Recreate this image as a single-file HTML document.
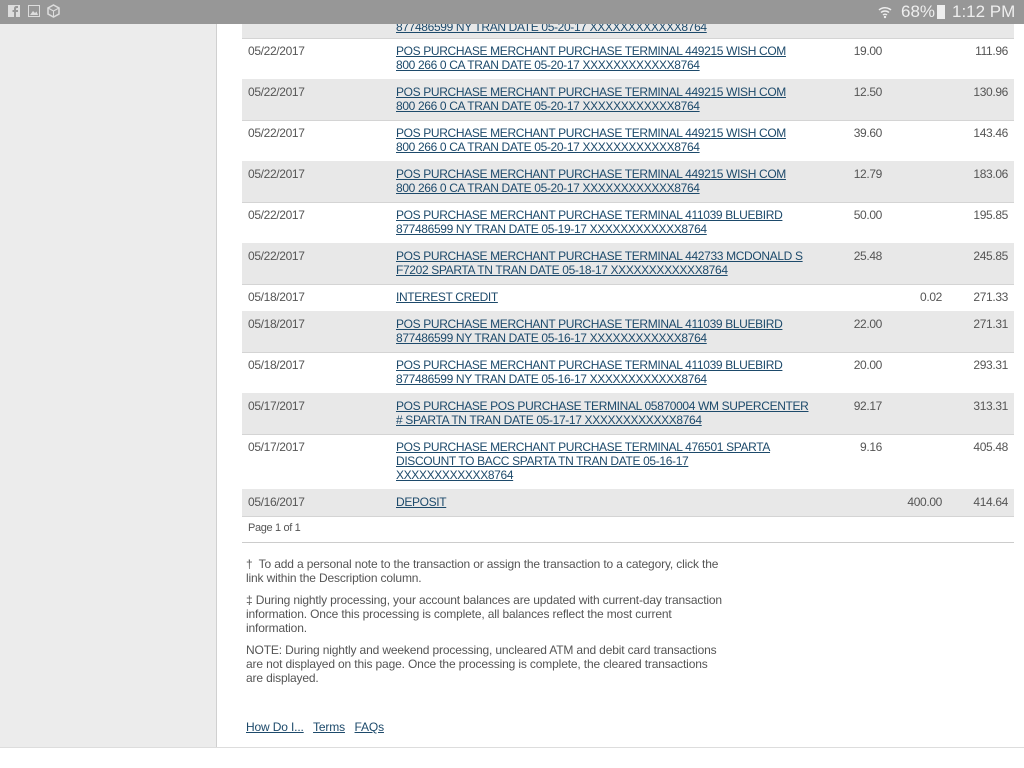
<!DOCTYPE html>
<html><head><meta charset="utf-8"><style>
*{margin:0;padding:0;box-sizing:border-box}
body{width:1024px;height:768px;overflow:hidden;background:#fff;font-family:"Liberation Sans",sans-serif;font-size:12px;color:#555;position:relative;letter-spacing:-0.35px}
#sb{position:absolute;left:0;top:0;width:1024px;height:24px;background:#979797;color:#eee;font-size:17px;letter-spacing:0;z-index:5}
#side{position:absolute;left:0;top:24px;width:217px;height:724px;background:#ececec;border-right:1px solid #d0d0d0}
#bot{position:absolute;left:0;top:747px;width:1024px;height:1px;background:#ddd}
.r{position:absolute;left:242px;width:772px;border-bottom:1px solid #d4d4d4;line-height:14px}
.g{background:#e8e8e8}
.r span{position:absolute;top:6px;white-space:nowrap}
.d{left:6px}.ds{left:154px}
.a{right:132px}.c{right:72px}.b{right:6px}
a{color:#1d4a6b;text-decoration:underline}
.n{position:absolute;left:246px;width:560px;line-height:14px;letter-spacing:-0.15px;white-space:nowrap}
</style></head><body>
<div id="sb">
<svg style="position:absolute;left:8px;top:5px" width="12" height="12"><rect width="12" height="12" fill="#ddd"/><path d="M8 12V7h2V5H8V4c0-.6.3-1 1-1h1V1H8.5C7 1 6 2 6 3.5V5H4.5v2H6v5z" fill="#979797"/></svg>
<svg style="position:absolute;left:28px;top:5px" width="12" height="12"><rect x=".5" y=".5" width="11" height="11" fill="none" stroke="#ddd"/><path d="M2 10l3-4 2 2 1.5-1.5L10 10z" fill="#ddd"/></svg>
<svg style="position:absolute;left:47px;top:4px" width="13" height="14"><path d="M6.5 1L12 4v6l-5.5 3L1 10V4z" fill="none" stroke="#ddd" stroke-width="1.5"/><path d="M1 4l5.5 3L12 4M6.5 7v6" stroke="#ddd" fill="none"/></svg>
<svg style="position:absolute;left:877px;top:4px" width="16" height="16"><path d="M2 6a9 9 0 0 1 12 0M4 8.5a6 6 0 0 1 8 0M6 11a3 3 0 0 1 4 0" stroke="#eee" stroke-width="1.5" fill="none"/><circle cx="8" cy="13" r="1.2" fill="#eee"/></svg>
<span style="position:absolute;left:901px;top:2px">68%</span>
<div style="position:absolute;left:937px;top:5px;width:8px;height:14px;background:#eee"></div>
<span style="position:absolute;left:952px;top:2px">1:12 PM</span>
</div>
<div id="side"></div>
<div class="r g" style="top:10px;height:29px"><span class="ds" style="top:10px"><a>877486599 NY TRAN DATE 05-20-17 XXXXXXXXXXXX8764</a></span></div>
<div class="r" style="top:38px;height:42px"><span class="d">05/22/2017</span><span class="ds"><a>POS PURCHASE MERCHANT PURCHASE TERMINAL 449215 WISH COM<br>800 266 0 CA TRAN DATE 05-20-17 XXXXXXXXXXXX8764</a></span><span class="a">19.00</span><span class="b">111.96</span></div>
<div class="r g" style="top:79px;height:42px"><span class="d">05/22/2017</span><span class="ds"><a>POS PURCHASE MERCHANT PURCHASE TERMINAL 449215 WISH COM<br>800 266 0 CA TRAN DATE 05-20-17 XXXXXXXXXXXX8764</a></span><span class="a">12.50</span><span class="b">130.96</span></div>
<div class="r" style="top:120px;height:42px"><span class="d">05/22/2017</span><span class="ds"><a>POS PURCHASE MERCHANT PURCHASE TERMINAL 449215 WISH COM<br>800 266 0 CA TRAN DATE 05-20-17 XXXXXXXXXXXX8764</a></span><span class="a">39.60</span><span class="b">143.46</span></div>
<div class="r g" style="top:161px;height:42px"><span class="d">05/22/2017</span><span class="ds"><a>POS PURCHASE MERCHANT PURCHASE TERMINAL 449215 WISH COM<br>800 266 0 CA TRAN DATE 05-20-17 XXXXXXXXXXXX8764</a></span><span class="a">12.79</span><span class="b">183.06</span></div>
<div class="r" style="top:202px;height:42px"><span class="d">05/22/2017</span><span class="ds"><a>POS PURCHASE MERCHANT PURCHASE TERMINAL 411039 BLUEBIRD<br>877486599 NY TRAN DATE 05-19-17 XXXXXXXXXXXX8764</a></span><span class="a">50.00</span><span class="b">195.85</span></div>
<div class="r g" style="top:243px;height:42px"><span class="d">05/22/2017</span><span class="ds"><a>POS PURCHASE MERCHANT PURCHASE TERMINAL 442733 MCDONALD S<br>F7202 SPARTA TN TRAN DATE 05-18-17 XXXXXXXXXXXX8764</a></span><span class="a">25.48</span><span class="b">245.85</span></div>
<div class="r" style="top:284px;height:28px"><span class="d">05/18/2017</span><span class="ds"><a>INTEREST CREDIT</a></span><span class="c">0.02</span><span class="b">271.33</span></div>
<div class="r g" style="top:311px;height:42px"><span class="d">05/18/2017</span><span class="ds"><a>POS PURCHASE MERCHANT PURCHASE TERMINAL 411039 BLUEBIRD<br>877486599 NY TRAN DATE 05-16-17 XXXXXXXXXXXX8764</a></span><span class="a">22.00</span><span class="b">271.31</span></div>
<div class="r" style="top:352px;height:42px"><span class="d">05/18/2017</span><span class="ds"><a>POS PURCHASE MERCHANT PURCHASE TERMINAL 411039 BLUEBIRD<br>877486599 NY TRAN DATE 05-16-17 XXXXXXXXXXXX8764</a></span><span class="a">20.00</span><span class="b">293.31</span></div>
<div class="r g" style="top:393px;height:42px"><span class="d">05/17/2017</span><span class="ds"><a>POS PURCHASE POS PURCHASE TERMINAL 05870004 WM SUPERCENTER<br># SPARTA TN TRAN DATE 05-17-17 XXXXXXXXXXXX8764</a></span><span class="a">92.17</span><span class="b">313.31</span></div>
<div class="r" style="top:434px;height:56px"><span class="d">05/17/2017</span><span class="ds"><a>POS PURCHASE MERCHANT PURCHASE TERMINAL 476501 SPARTA<br>DISCOUNT TO BACC SPARTA TN TRAN DATE 05-16-17<br>XXXXXXXXXXXX8764</a></span><span class="a">9.16</span><span class="b">405.48</span></div>
<div class="r g" style="top:489px;height:28px"><span class="d">05/16/2017</span><span class="ds"><a>DEPOSIT</a></span><span class="c">400.00</span><span class="b">414.64</span></div>
<div style="position:absolute;left:248px;top:522px;font-size:11px">Page 1 of 1</div>
<div style="position:absolute;left:242px;top:542px;width:772px;height:1px;background:#ccc"></div>
<div class="n" style="top:557px">†&nbsp; To add a personal note to the transaction or assign the transaction to a category, click the<br>link within the Description column.</div>
<div class="n" style="top:593px">‡ During nightly processing, your account balances are updated with current-day transaction<br>information. Once this processing is complete, all balances reflect the most current<br>information.</div>
<div class="n" style="top:643px">NOTE: During nightly and weekend processing, uncleared ATM and debit card transactions<br>are not displayed on this page. Once the processing is complete, the cleared transactions<br>are displayed.</div>
<div class="n" style="top:720px"><a>How Do I...</a>&nbsp;&nbsp; <a>Terms</a>&nbsp;&nbsp; <a>FAQs</a></div>
<div id="bot"></div>
</body></html>
